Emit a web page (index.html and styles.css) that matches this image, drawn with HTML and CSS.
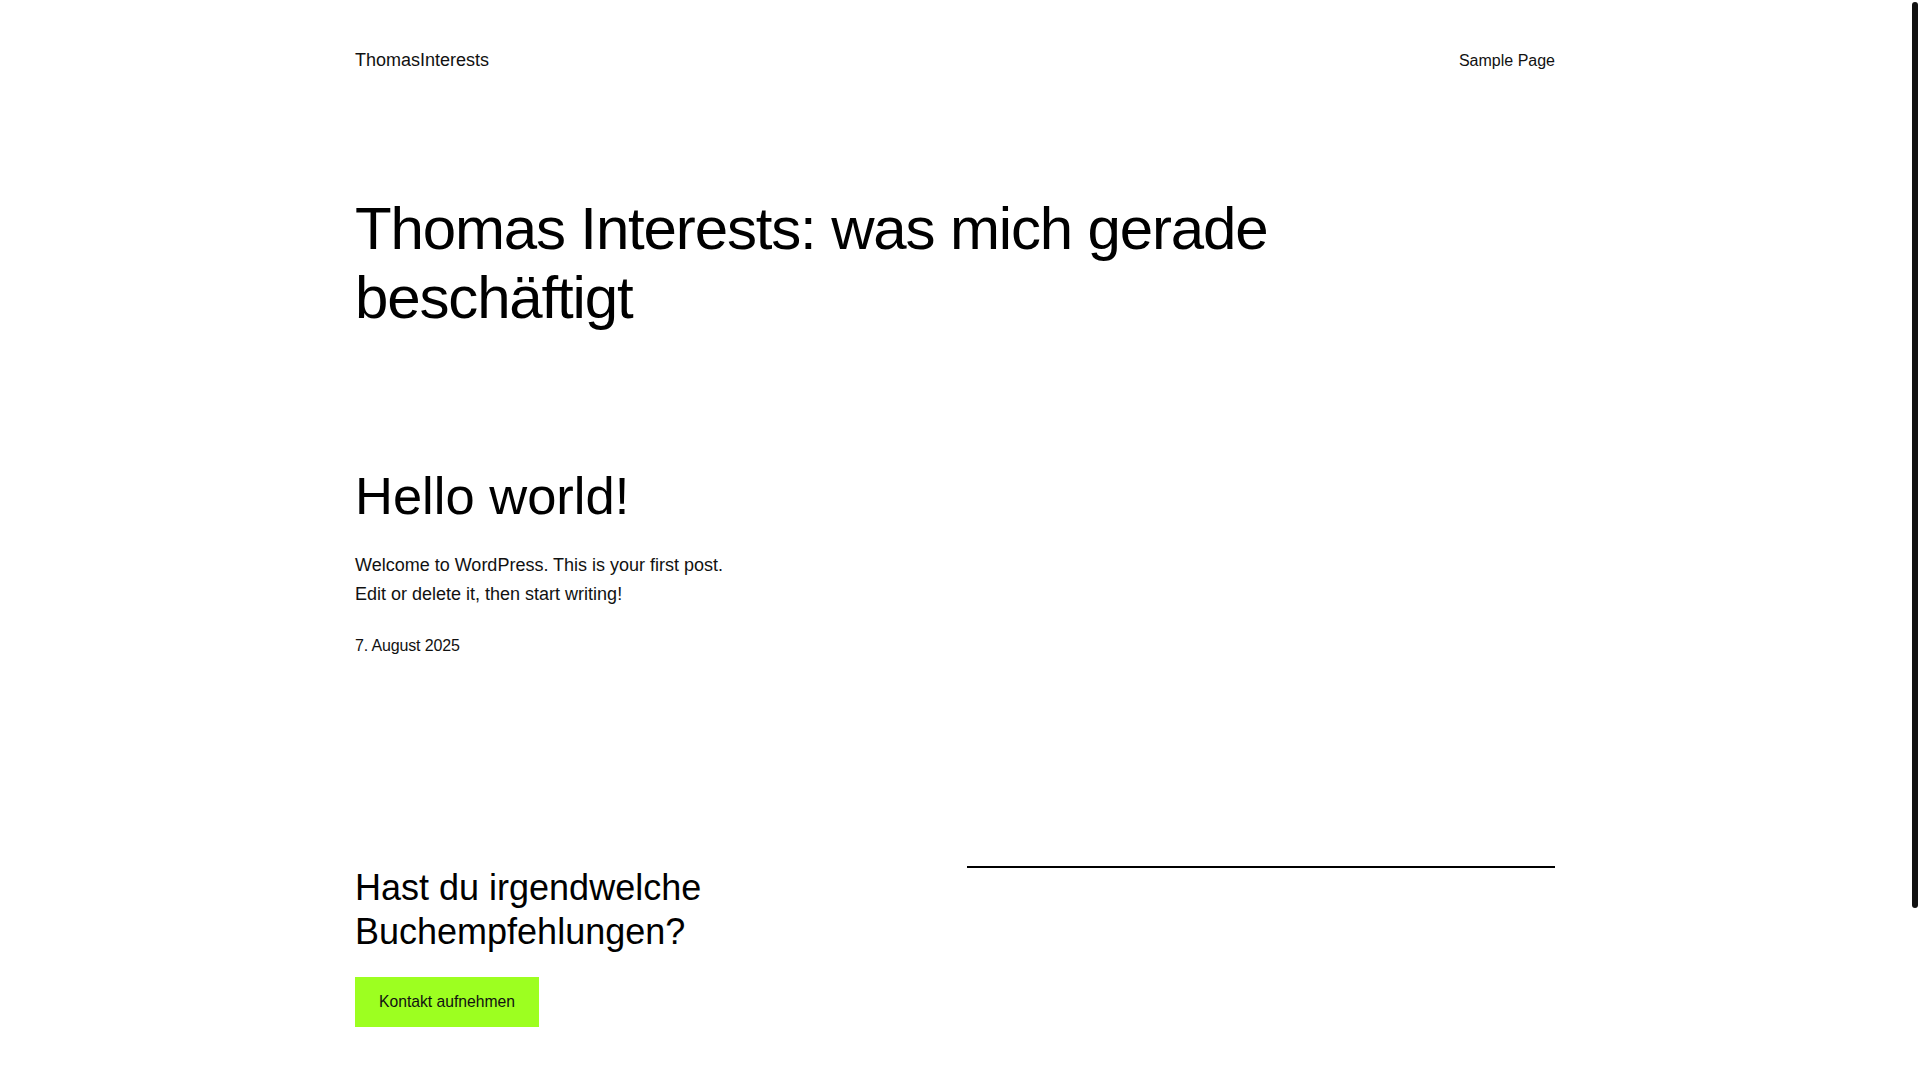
FILE: index.html
```html
<!DOCTYPE html>
<html lang="de">
<head>
<meta charset="utf-8">
<title>ThomasInterests</title>
<link rel="stylesheet" href="styles.css">
</head>
<body>
<div class="wrap">
  <header class="site-header">
    <a class="site-title" href="#">ThomasInterests</a>
    <nav class="site-nav"><a href="#">Sample Page</a></nav>
  </header>

  <main>
    <h1 class="page-title">Thomas Interests: was mich gerade beschäftigt</h1>

    <section class="posts">
      <article class="post">
        <h2 class="post-title">Hello world!</h2>
        <p class="post-excerpt">Welcome to WordPress. This is your first post. Edit or delete it, then start writing!</p>
        <div class="post-date">7. August 2025</div>
      </article>
    </section>

    <section class="cta">
      <div class="cta-left">
        <h2 class="cta-title">Hast du irgendwelche Buchempfehlungen?</h2>
        <a class="cta-button" href="#">Kontakt aufnehmen</a>
      </div>
      <div class="cta-right">
        <hr class="separator">
      </div>
    </section>
  </main>
</div>
<div class="scroll-thumb" aria-hidden="true"></div>
</body>
</html>
```

FILE: styles.css
```css
html {
  background: #ffffff;
}

body {
  margin: 0;
  padding-right: 10px;
  font-family: "Liberation Sans", Arial, sans-serif;
  color: #111111;
  background: #ffffff;
}

a {
  color: inherit;
  text-decoration: none;
}

.scroll-thumb {
  position: fixed;
  top: 2px;
  right: 2px;
  width: 6px;
  height: 906px;
  background: #111111;
  border-radius: 3px;
}

.wrap {
  max-width: 1200px;
  margin: 0 auto;
  padding-bottom: 257px;
}

.site-header {
  display: flex;
  justify-content: space-between;
  align-items: center;
  padding-top: 47px;
  height: 27px;
}

.site-title {
  font-size: 18px;
  line-height: 27px;
}

.site-nav {
  font-size: 16px;
  line-height: 27px;
}

.page-title {
  margin: 121px 0 0;
  font-size: 60px;
  line-height: 68.5px;
  font-weight: 400;
  letter-spacing: -1.15px;
  color: #000000;
}

.posts {
  display: grid;
  grid-template-columns: repeat(3, 1fr);
  gap: 24px;
  margin-top: 132.5px;
}

.post-title {
  margin: 0;
  font-size: 52.5px;
  line-height: 62px;
  font-weight: 400;
  color: #000000;
}

.post-excerpt {
  margin: 24px 0 0;
  font-size: 18px;
  line-height: 29.4px;
}

.post-date {
  margin-top: 24px;
  font-size: 16px;
  line-height: 25.6px;
  letter-spacing: -0.15px;
}

.cta {
  display: grid;
  grid-template-columns: 1fr 1fr;
  gap: 24px;
  margin-top: 207px;
}

.cta-title {
  margin: 0;
  font-size: 36px;
  line-height: 44px;
  font-weight: 400;
  color: #000000;
}

.cta-button {
  display: inline-block;
  margin-top: 23px;
  padding: 16px 24px;
  font-size: 15.7px;
  line-height: 18px;
  background: #9dff20;
  color: #111111;
}

.separator {
  margin: 0;
  border: 0;
  border-top: 2px solid #000000;
  height: 0;
}
```
